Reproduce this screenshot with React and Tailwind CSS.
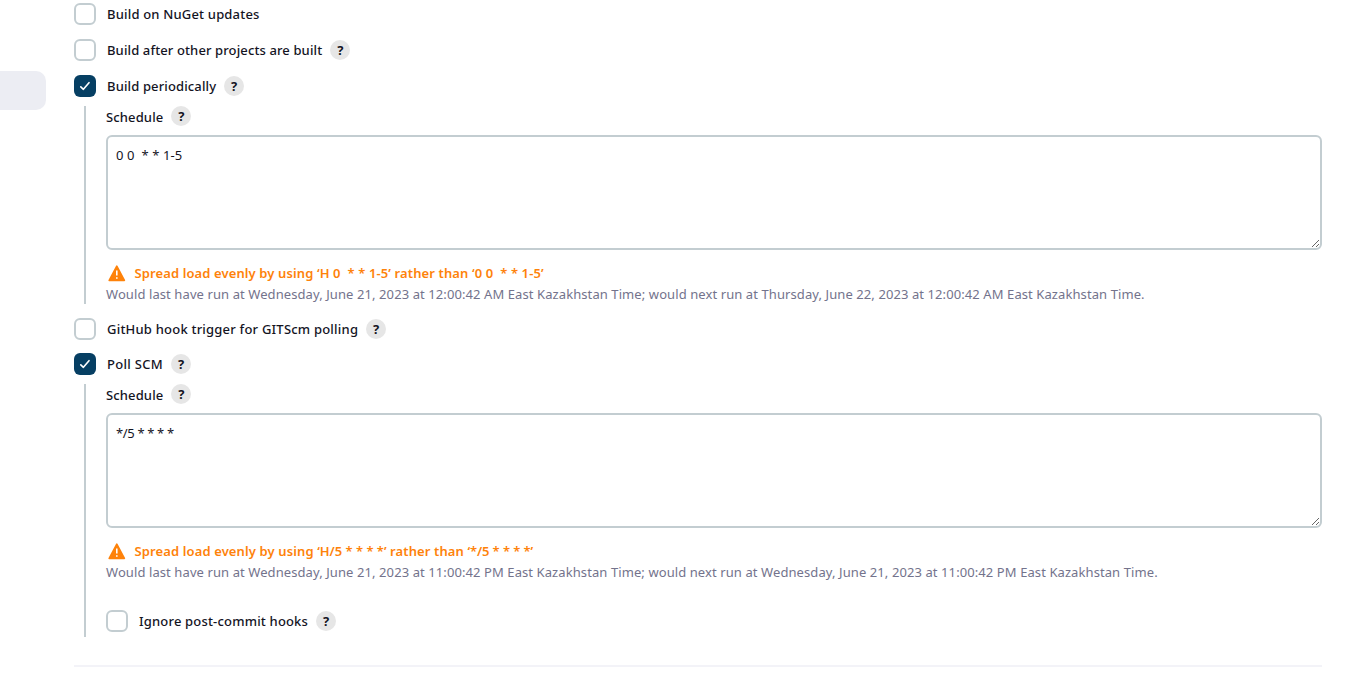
import React from "react";

function Check({ checked }) {
  return checked ? (
    <span className="flex h-[22px] w-[22px] shrink-0 items-center justify-center rounded-[6px] bg-[#063f63]">
      <svg width="22" height="22" viewBox="0 0 22 22" fill="none" stroke="#fff" strokeWidth="1.6" strokeLinecap="round" strokeLinejoin="round">
        <path d="M6.8 11.8l2.6 2.5 5.6-6.6" />
      </svg>
    </span>
  ) : (
    <span className="h-[22px] w-[22px] shrink-0 rounded-[6px] border-2 border-[#c3cdd1] bg-white" />
  );
}

function Help() {
  return (
    <span className="ml-2 flex h-5 w-5 shrink-0 items-center justify-center rounded-full bg-[#e6e6e6] text-[13px] font-bold leading-5 text-[#14141f]">?</span>
  );
}

function Option({ checked, label, help, className = "", tracking = "" }) {
  return (
    <div className={"flex h-[22px] items-center " + className}>
      <Check checked={checked} />
      <span className={"ml-[11px] whitespace-pre font-medium " + tracking}>{label}</span>
      {help && <Help />}
    </div>
  );
}

function Schedule({ value, valueTracking, warning, info }) {
  return (
    <>
      <div className="flex h-5 items-center">
        <span className="pt-[2px] font-medium tracking-[0.13px]">Schedule</span>
        <Help />
      </div>
      <textarea
        readOnly
        defaultValue={value}
        className={"mt-[9px] block h-[115px] w-full resize rounded-[6px] border-2 border-[#c3cdd1] bg-white px-2 py-2 text-[13px] leading-[21px] outline-none " + valueTracking}
      />
      <div className="mt-[13px] flex h-[21px] items-center text-[#fe820a]">
        <svg className="ml-[2px] mr-[8.5px] shrink-0" width="18" height="17" viewBox="0 0 18 17">
          <path d="M8.8 1.2L16.4 15.4H1.2Z" fill="currentColor" stroke="currentColor" strokeWidth="1.6" strokeLinejoin="round" />
          <path d="M8.8 5.6v5M8.8 12.2v1.6" stroke="#fff" strokeWidth="1.6" />
        </svg>
        <span className="whitespace-pre font-semibold">{warning}</span>
      </div>
      <p className="flex h-[21px] items-center whitespace-pre tracking-[0.088px] text-[#73738c]">{info}</p>
    </>
  );
}

export default function App() {
  return (
    <div className="flex h-[690px] w-[1352px] overflow-hidden bg-white font-['Noto_Sans',sans-serif] text-[13px] leading-[21px] text-[#14141f]">
      <aside className="w-[74px] shrink-0 pt-[71px]">
        <div className="h-[39px] w-[46px] rounded-r-[10px] bg-[#ecedf3]" />
      </aside>
      <main className="w-[1248px] pt-[3px]">
        <Option label="Build on NuGet updates" tracking="tracking-[0.18px]" />
        <Option className="mt-[14px]" label="Build after other projects are built" tracking="tracking-[0.12px]" help />
        <Option className="mt-[14px]" label="Build periodically" tracking="tracking-[0.13px]" help checked />
        <div className="ml-[10px] mt-[9px] h-[198px] border-l-2 border-[#c3cdd1] pl-[20px]">
          <Schedule
            value="0 0  * * 1-5"
            valueTracking="tracking-[0.1px]"
            warning={<span className="tracking-[0.11px]">Spread load evenly by using ‘H 0  * * 1-5’ rather than ‘0 0  * * 1-5’</span>}
            info="Would last have run at Wednesday, June 21, 2023 at 12:00:42 AM East Kazakhstan Time; would next run at Thursday, June 22, 2023 at 12:00:42 AM East Kazakhstan Time."
          />
        </div>
        <Option className="mt-[14px]" label="GitHub hook trigger for GITScm polling" tracking="tracking-[0.21px]" help />
        <Option className="mt-[13px]" label="Poll SCM" tracking="tracking-[0.3px]" help checked />
        <div className="ml-[10px] mt-[9px] h-[253px] border-l-2 border-[#c3cdd1] pl-[20px]">
          <Schedule
            value="*/5 * * * *"
            valueTracking="tracking-[-0.35px]"
            warning={
              <>
                <span className="tracking-[0.12px]">Spread load evenly by using </span>
                <span className="tracking-[-0.02px]">‘H/5 * * * *’</span>
                <span className="tracking-[0.11px]"> rather than </span>
                <span className="tracking-[-0.1px]">‘*/5 * * * *’</span>
              </>
            }
            info="Would last have run at Wednesday, June 21, 2023 at 11:00:42 PM East Kazakhstan Time; would next run at Wednesday, June 21, 2023 at 11:00:42 PM East Kazakhstan Time."
          />
          <Option className="mt-[27px]" label="Ignore post-commit hooks" tracking="tracking-[0.18px]" help />
        </div>
        <div className="mt-7 h-[2px] bg-[#f3f3f8]" />
      </main>
    </div>
  );
}
